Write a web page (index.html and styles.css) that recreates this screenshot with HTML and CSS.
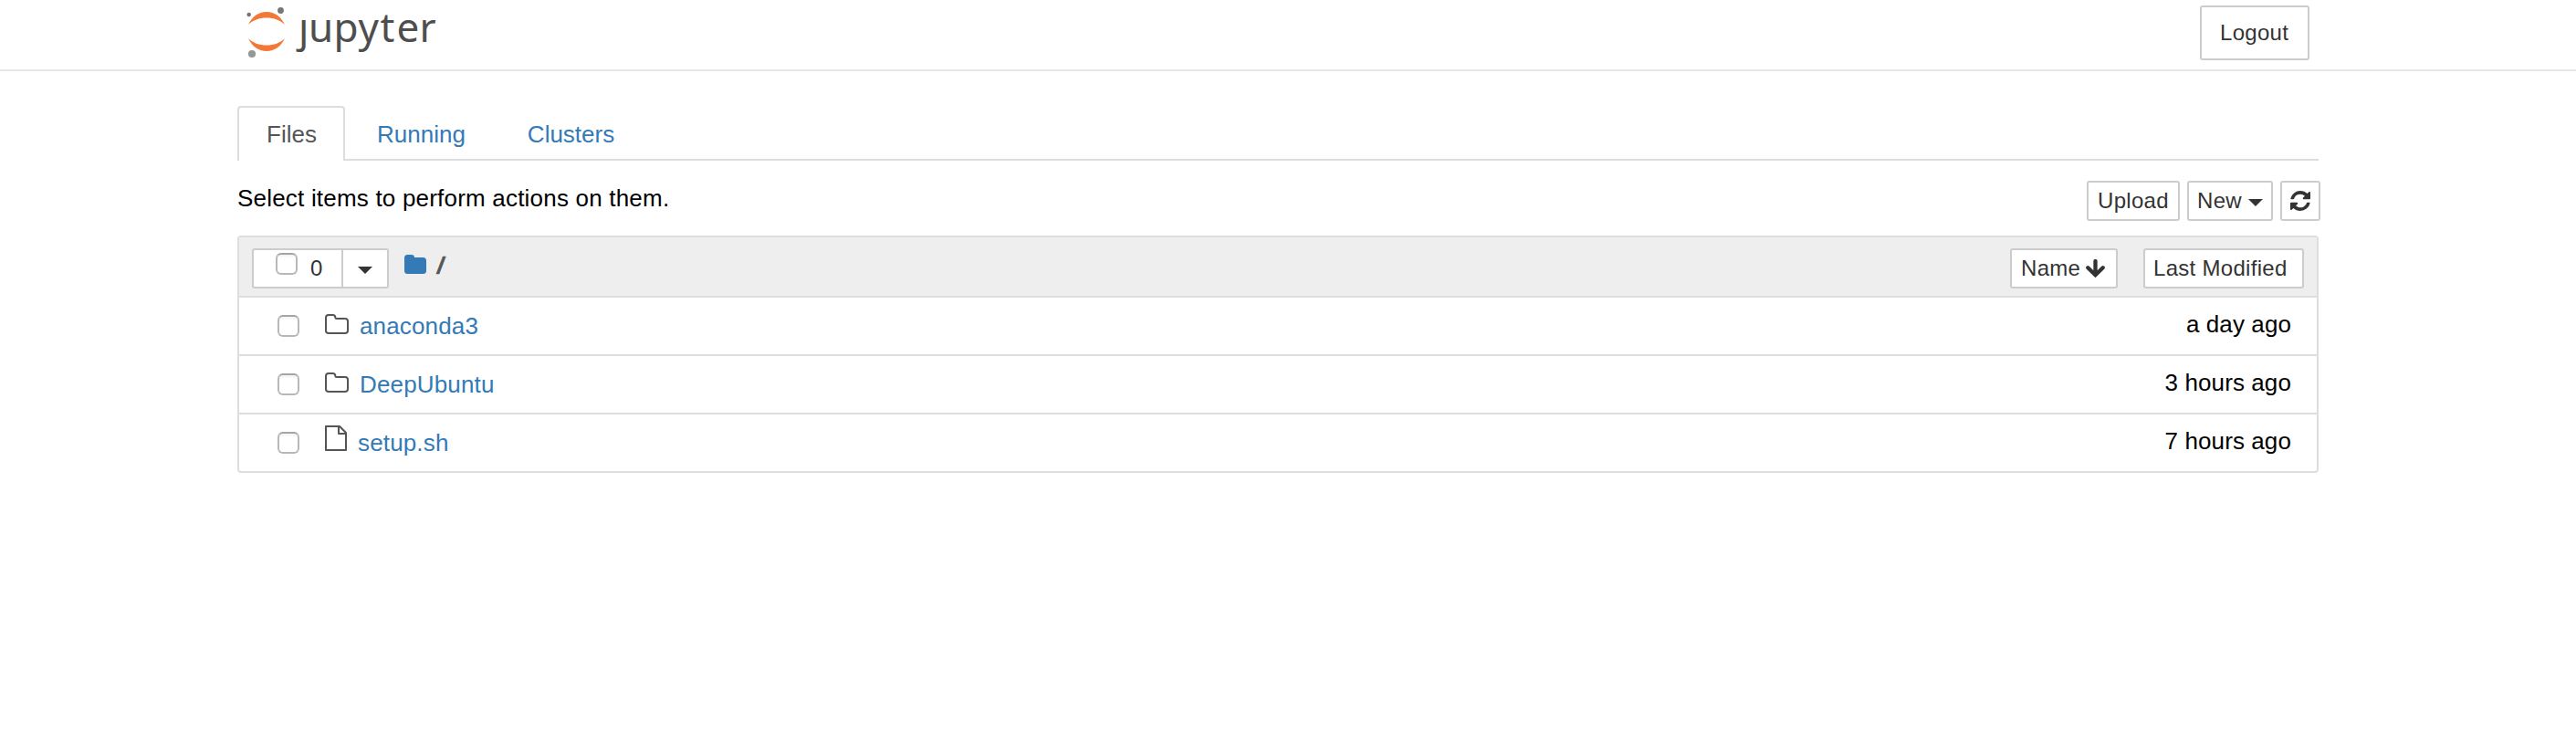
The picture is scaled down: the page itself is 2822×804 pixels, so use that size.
FILE: index.html
```
<!DOCTYPE html>
<html lang="en">
<head>
<meta charset="utf-8">
<title>Home</title>
<link rel="stylesheet" href="styles.css">
</head>
<body>
<svg class="sprite" width="0" height="0" aria-hidden="true">
  <symbol id="folder-open-line" viewBox="0 0 26 22">
    <path d="M1 4Q1 1 4 1H8.500Q11.300 1 11.300 3.500Q11.300 5 13 5H22Q25 5 25 8V18Q25 21 22 21H4Q1 21 1 18Z" fill="none" stroke="#555" stroke-width="2"/>
  </symbol>
</svg>
<header class="header">
  <svg class="logo" width="220" height="66" viewBox="0 0 220 66" role="img" aria-label="jupyter">
    <clipPath id="stem"><rect x="50" y="21.500" width="26" height="40"/></clipPath>
    <path d="M4 27C8 18.500 15 13 24 13S40 18.500 44 27C39 22 32 19.500 24 19.500S9 22 4 27Z" fill="#f37736"/>
    <path d="M4 42C8 50.500 15 56 24 56S40 50.500 44 42C39 47 32 49.500 24 49.500S9 47 4 42Z" fill="#f37736"/>
    <circle cx="39.500" cy="11.500" r="3.400" fill="#767677"/>
    <circle cx="4.700" cy="16" r="2.300" fill="#767677"/>
    <circle cx="8" cy="59" r="4.100" fill="#989798"/>
    <text class="logo-text" x="59" y="46" clip-path="url(#stem)">j</text>
    <text class="logo-text" x="70 97.500 124.500 148.500 166.500 191.500" y="46">upyter</text>
  </svg>
  <button class="btn btn-logout">Logout</button>
</header>
<main class="page">
  <nav class="tabs">
    <a class="tab active">Files</a>
    <a class="tab">Running</a>
    <a class="tab">Clusters</a>
  </nav>
  <div class="toolbar">
    <p class="hint">Select items to perform actions on them.</p>
    <div class="actions">
      <button class="btn btn-upload">Upload</button>
      <button class="btn btn-new">New<span class="caret"></span></button>
      <button class="btn btn-refresh" aria-label="Refresh">
        <svg width="22" height="22" viewBox="0 0 1536 1536"><path fill="#333" d="M1511 928q0 5-1 7-64 268-268 434.500T764 1536q-146 0-282.500-55T238 1324l-129 129q-19 19-45 19t-45-19-19-45V960q0-26 19-45t45-19h448q26 0 45 19t19 45-19 45l-137 137q71 66 161 102t187 36q134 0 250-65t186-179q11-17 53-117 8-23 30-23h192q13 0 22.500 9.500t9.500 22.500zM1536 128v448q0 26-19 45t-45 19h-448q-26 0-45-19t-19-45 19-45l138-138Q969 256 768 256q-134 0-250 65T332 500q-11 17-53 117-8 23-30 23H50q-13 0-22.500-9.500T18 608v-7q65-268 270-434.500T768 0q146 0 284 55.500T1297 212l130-129q19-19 45-19t45 19 19 45z"/></svg>
      </button>
    </div>
  </div>
  <section class="list">
    <div class="list-head">
      <div class="select-group">
        <button class="btn select-all"><span class="check"></span><span class="count">0</span></button>
        <button class="btn select-menu" aria-label="Select"><span class="caret"></span></button>
      </div>
      <div class="crumbs">
        <svg width="24" height="21" viewBox="0 0 24 21"><path fill="#337ab7" d="M0 3.500Q0 0 3.500 0H7.500Q11 0 11 3H20.500Q24 3 24 6.500V17.500Q24 21 20.500 21H3.500Q0 21 0 17.500Z"/></svg>
        <span class="slash">/</span>
      </div>
      <div class="sorts">
        <button class="btn btn-name">Name<svg width="21" height="20" viewBox="0 0 21 20"><path d="M10.500 2V16M2.300 9.300L10.500 17.200L18.700 9.300" fill="none" stroke="#333" stroke-width="4.300" stroke-linecap="round"/></svg></button>
        <button class="btn btn-modified">Last Modified</button>
      </div>
    </div>
    <div class="row">
      <span class="check"></span>
      <svg class="icon" width="26" height="22"><use href="#folder-open-line"/></svg>
      <a class="name">anaconda3</a><span class="time">a day ago</span>
    </div>
    <div class="row">
      <span class="check"></span>
      <svg class="icon" width="26" height="22"><use href="#folder-open-line"/></svg>
      <a class="name">DeepUbuntu</a><span class="time">3 hours ago</span>
    </div>
    <div class="row">
      <span class="check"></span>
      <svg class="icon icon-file" width="24" height="28" viewBox="0 0 24 28"><path d="M1 1H16L23 8V27H1ZM15 1V9H23" fill="none" stroke="#555" stroke-width="2" stroke-linejoin="round"/></svg>
      <a class="name name-file">setup.sh</a><span class="time">7 hours ago</span>
    </div>
  </section>
</main>
</body>
</html>
```
FILE: styles.css
```
* { box-sizing: border-box; }
body {
  margin: 0;
  background: #fff;
  color: #000;
  font: 26px/36px "Liberation Sans", Arial, Helvetica, sans-serif;
}
.sprite { display: none; }
.header {
  display: flex;
  justify-content: space-between;
  align-items: flex-start;
  height: 78px;
  padding: 0 292px 0 268px;
  border-bottom: 2px solid #e7e7e7;
}
.logo { display: block; }
.logo-text { font: 44px "Noto Sans", "Open Sans", sans-serif; fill: #4e4e4e; }
.btn {
  display: flex;
  align-items: center;
  height: 44px;
  margin: 0;
  padding: 0 10px;
  border: 2px solid #ccc;
  border-radius: 3px;
  background: #fff;
  color: #333;
  font: 24px/36px "Liberation Sans", Arial, Helvetica, sans-serif;
  letter-spacing: 0.3px;
  white-space: nowrap;
}
.btn-logout { width: 120px; height: 60px; margin-top: 6px; padding: 0 20px; }
.page { padding: 38px 282px 0 260px; }
.tabs {
  display: flex;
  gap: 4px;
  height: 60px;
  border-bottom: 2px solid #ddd;
}
.tab {
  height: 60px;
  padding: 11px 30px 0;
  border: 2px solid transparent;
  border-bottom: 0;
  border-radius: 4px 4px 0 0;
  color: #337ab7;
}
.tab + .tab { padding-left: 30px; }
.tab.active { width: 118px; margin-right: -1px; background: #fff; border-color: #ddd; color: #555; }
.toolbar {
  display: flex;
  justify-content: space-between;
  align-items: flex-start;
  height: 82px;
  margin-right: -2px;
  padding-top: 22px;
}
.hint { margin: 0; padding-top: 1px; letter-spacing: 0.2px; }
.actions { display: flex; gap: 8px; }
.btn-upload { width: 102px; }
.btn-new { width: 94px; padding: 0 9px; gap: 7px; }
.btn-refresh { width: 44px; padding: 0 9px; }
.btn-refresh svg { flex: none; }
.caret {
  width: 16px;
  height: 8px;
  margin-top: 4px;
  background: #333;
  clip-path: polygon(0 0, 100% 0, 50% 100%);
}
.list { border: 2px solid #ddd; border-radius: 4px; }
.list-head {
  display: flex;
  align-items: flex-start;
  height: 64px;
  padding: 12px 14px 0;
  background: #eee;
}
.select-group { display: flex; }
.select-all {
  width: 100px;
  padding: 0 0 0 24px;
  gap: 14px;
  border-radius: 3px 0 0 3px;
}
.select-all .check { margin-top: -10px; }
.select-menu { width: 52px; margin-left: -2px; padding: 0 16px; border-radius: 0 3px 3px 0; }
.check {
  flex: none;
  width: 24px;
  height: 24px;
  border: 2px solid #b8b8b8;
  border-top-color: #a5a5a5;
  border-radius: 6px;
  background: linear-gradient(#f1f1f1, #fff 4px);
}
.crumbs { display: flex; gap: 11px; padding: 7px 0 0 17px; }
.slash {
  line-height: 24px;
  color: #555;
  -webkit-text-stroke: 0.5px #555;
  transform: scaleX(1.4);
  transform-origin: left;
}
.sorts { display: flex; gap: 28px; margin-left: auto; }
.btn-name { width: 118px; gap: 6px; }
.btn-name svg { flex: none; }
.btn-modified { width: 176px; padding: 0 9px; }
.row {
  display: flex;
  align-items: flex-start;
  height: 64px;
  padding: 0 28px 0 42px;
  border-top: 2px solid #ddd;
}
.row .check { margin-top: 19px; }
.icon { flex: none; margin: 18px 12px 0 28px; }
.icon-file { margin-top: 12px; }
.name { margin-top: 13px; color: #337ab7; letter-spacing: 0.15px; }
.time { margin: 11px 0 0 auto; letter-spacing: 0.1px; }
```
